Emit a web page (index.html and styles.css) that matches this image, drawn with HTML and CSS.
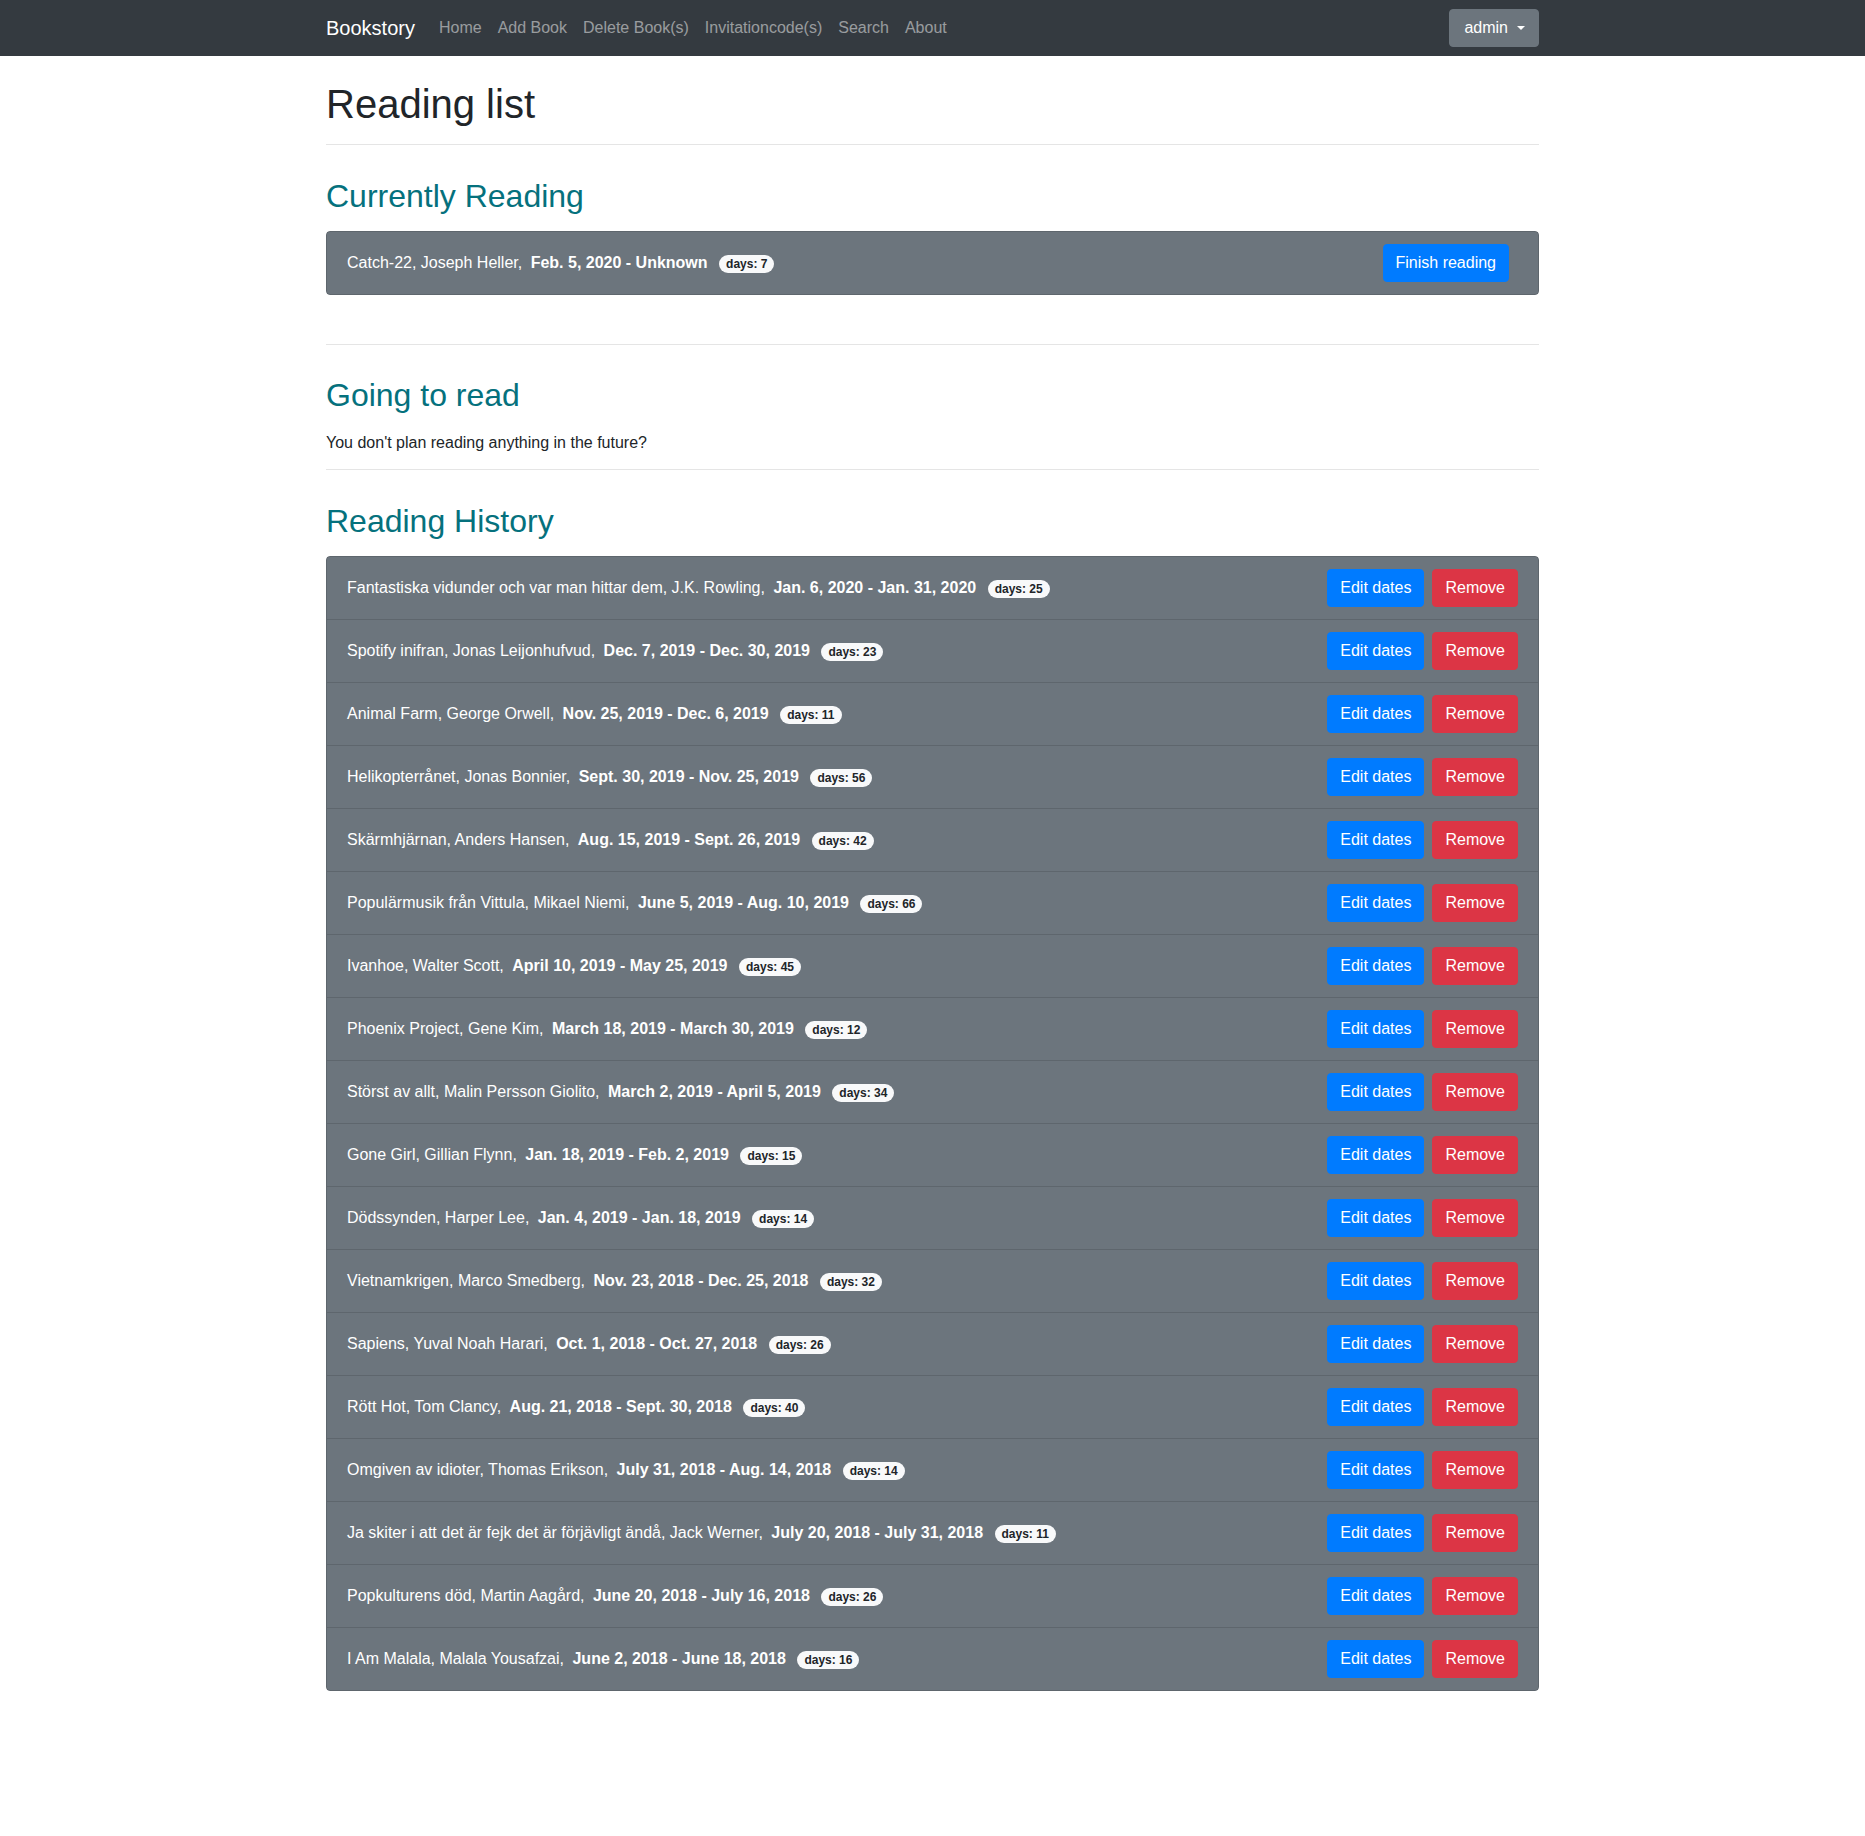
FILE: index.html
```html
<!DOCTYPE html>
<html lang="sv">
<head>
<meta charset="utf-8">
<title>Reading list</title>
<link rel="stylesheet" href="styles.css">
</head>
<body>
<nav class="navbar">
  <div class="container nav-inner">
    <div class="nav-left">
      <a class="brand" href="#">Bookstory</a>
      <a class="nav-link" href="#">Home</a>
      <a class="nav-link" href="#">Add Book</a>
      <a class="nav-link" href="#">Delete Book(s)</a>
      <a class="nav-link" href="#">Invitationcode(s)</a>
      <a class="nav-link" href="#">Search</a>
      <a class="nav-link" href="#">About</a>
    </div>
    <button class="btn btn-secondary dropdown-toggle">admin</button>
  </div>
</nav>

<main class="container">
  <h1 class="page-title">Reading list</h1>
  <hr>

  <h2 class="section-title">Currently Reading</h2>
  <ul class="list-group current">
    <li class="list-item">
      <span class="book">Catch-22, Joseph Heller, <b class="dates">Feb. 5, 2020 - Unknown</b> <span class="badge">days: 7</span></span>
      <span class="actions finish"><button class="btn btn-primary">Finish reading</button></span>
    </li>
  </ul>

  <hr>
  <h2 class="section-title going">Going to read</h2>
  <p class="empty">You don't plan reading anything in the future?</p>
  <hr class="hr-tight">

  <h2 class="section-title">Reading History</h2>
  <ul class="list-group">
    <li class="list-item"><span class="book">Fantastiska vidunder och var man hittar dem, J.K. Rowling, <b class="dates">Jan. 6, 2020 - Jan. 31, 2020</b> <span class="badge">days: 25</span></span><span class="actions"><button class="btn btn-primary">Edit dates</button><button class="btn btn-danger">Remove</button></span></li>
    <li class="list-item"><span class="book">Spotify inifran, Jonas Leijonhufvud, <b class="dates">Dec. 7, 2019 - Dec. 30, 2019</b> <span class="badge">days: 23</span></span><span class="actions"><button class="btn btn-primary">Edit dates</button><button class="btn btn-danger">Remove</button></span></li>
    <li class="list-item"><span class="book">Animal Farm, George Orwell, <b class="dates">Nov. 25, 2019 - Dec. 6, 2019</b> <span class="badge">days: 11</span></span><span class="actions"><button class="btn btn-primary">Edit dates</button><button class="btn btn-danger">Remove</button></span></li>
    <li class="list-item"><span class="book">Helikopterrånet, Jonas Bonnier, <b class="dates">Sept. 30, 2019 - Nov. 25, 2019</b> <span class="badge">days: 56</span></span><span class="actions"><button class="btn btn-primary">Edit dates</button><button class="btn btn-danger">Remove</button></span></li>
    <li class="list-item"><span class="book">Skärmhjärnan, Anders Hansen, <b class="dates">Aug. 15, 2019 - Sept. 26, 2019</b> <span class="badge">days: 42</span></span><span class="actions"><button class="btn btn-primary">Edit dates</button><button class="btn btn-danger">Remove</button></span></li>
    <li class="list-item"><span class="book">Populärmusik från Vittula, Mikael Niemi, <b class="dates">June 5, 2019 - Aug. 10, 2019</b> <span class="badge">days: 66</span></span><span class="actions"><button class="btn btn-primary">Edit dates</button><button class="btn btn-danger">Remove</button></span></li>
    <li class="list-item"><span class="book">Ivanhoe, Walter Scott, <b class="dates">April 10, 2019 - May 25, 2019</b> <span class="badge">days: 45</span></span><span class="actions"><button class="btn btn-primary">Edit dates</button><button class="btn btn-danger">Remove</button></span></li>
    <li class="list-item"><span class="book">Phoenix Project, Gene Kim, <b class="dates">March 18, 2019 - March 30, 2019</b> <span class="badge">days: 12</span></span><span class="actions"><button class="btn btn-primary">Edit dates</button><button class="btn btn-danger">Remove</button></span></li>
    <li class="list-item"><span class="book">Störst av allt, Malin Persson Giolito, <b class="dates">March 2, 2019 - April 5, 2019</b> <span class="badge">days: 34</span></span><span class="actions"><button class="btn btn-primary">Edit dates</button><button class="btn btn-danger">Remove</button></span></li>
    <li class="list-item"><span class="book">Gone Girl, Gillian Flynn, <b class="dates">Jan. 18, 2019 - Feb. 2, 2019</b> <span class="badge">days: 15</span></span><span class="actions"><button class="btn btn-primary">Edit dates</button><button class="btn btn-danger">Remove</button></span></li>
    <li class="list-item"><span class="book">Dödssynden, Harper Lee, <b class="dates">Jan. 4, 2019 - Jan. 18, 2019</b> <span class="badge">days: 14</span></span><span class="actions"><button class="btn btn-primary">Edit dates</button><button class="btn btn-danger">Remove</button></span></li>
    <li class="list-item"><span class="book">Vietnamkrigen, Marco Smedberg, <b class="dates">Nov. 23, 2018 - Dec. 25, 2018</b> <span class="badge">days: 32</span></span><span class="actions"><button class="btn btn-primary">Edit dates</button><button class="btn btn-danger">Remove</button></span></li>
    <li class="list-item"><span class="book">Sapiens, Yuval Noah Harari, <b class="dates">Oct. 1, 2018 - Oct. 27, 2018</b> <span class="badge">days: 26</span></span><span class="actions"><button class="btn btn-primary">Edit dates</button><button class="btn btn-danger">Remove</button></span></li>
    <li class="list-item"><span class="book">Rött Hot, Tom Clancy, <b class="dates">Aug. 21, 2018 - Sept. 30, 2018</b> <span class="badge">days: 40</span></span><span class="actions"><button class="btn btn-primary">Edit dates</button><button class="btn btn-danger">Remove</button></span></li>
    <li class="list-item"><span class="book">Omgiven av idioter, Thomas Erikson, <b class="dates">July 31, 2018 - Aug. 14, 2018</b> <span class="badge">days: 14</span></span><span class="actions"><button class="btn btn-primary">Edit dates</button><button class="btn btn-danger">Remove</button></span></li>
    <li class="list-item"><span class="book">Ja skiter i att det är fejk det är förjävligt ändå, Jack Werner, <b class="dates">July 20, 2018 - July 31, 2018</b> <span class="badge">days: 11</span></span><span class="actions"><button class="btn btn-primary">Edit dates</button><button class="btn btn-danger">Remove</button></span></li>
    <li class="list-item"><span class="book">Popkulturens död, Martin Aagård, <b class="dates">June 20, 2018 - July 16, 2018</b> <span class="badge">days: 26</span></span><span class="actions"><button class="btn btn-primary">Edit dates</button><button class="btn btn-danger">Remove</button></span></li>
    <li class="list-item"><span class="book">I Am Malala, Malala Yousafzai, <b class="dates">June 2, 2018 - June 18, 2018</b> <span class="badge">days: 16</span></span><span class="actions"><button class="btn btn-primary">Edit dates</button><button class="btn btn-danger">Remove</button></span></li>
  </ul>
</main>
</body>
</html>
```

FILE: styles.css
```css
* { box-sizing: border-box; }

html, body {
  margin: 0;
  padding: 0;
}

body {
  font-family: "Liberation Sans", Arial, sans-serif;
  font-size: 16px;
  line-height: 1.5;
  color: #212529;
  background: #fff;
}

.container {
  max-width: 1243px;
  margin: 0 auto;
  padding: 0 15px;
}

/* navbar */
.navbar {
  background: #343a40;
  padding: 8px 0;
}

.nav-inner {
  display: flex;
  align-items: center;
  justify-content: space-between;
  height: 40px;
}

.nav-left {
  display: flex;
  align-items: center;
}

.brand {
  color: #fff;
  font-size: 20px;
  line-height: 30px;
  padding: 5px 0;
  margin-right: 16px;
  text-decoration: none;
}

.nav-link {
  color: rgba(255, 255, 255, 0.5);
  text-decoration: none;
  padding: 8px 8px;
  line-height: 24px;
}

/* buttons */
.btn {
  font-family: inherit;
  font-size: 16px;
  line-height: 24px;
  padding: 6px 12px;
  border: 1px solid transparent;
  border-radius: 4px;
  color: #fff;
  cursor: pointer;
}

.btn-primary { background: #007bff; border-color: #007bff; }
.btn-danger { background: #dc3545; border-color: #dc3545; }
.btn-secondary { background: #6c757d; border-color: #6c757d; }

.dropdown-toggle {
  padding-left: 14px;
  padding-right: 13px;
}

.dropdown-toggle::after {
  content: "";
  display: inline-block;
  margin-left: 9px;
  vertical-align: 3px;
  border-top: 4.8px solid #fff;
  border-left: 4.8px solid transparent;
  border-right: 4.8px solid transparent;
}

/* headings */
.page-title {
  font-size: 40px;
  font-weight: 500;
  line-height: 1.2;
  margin: 24px 0 8px;
}

hr {
  border: 0;
  border-top: 1px solid rgba(0, 0, 0, 0.1);
  margin: 16px 0;
}

hr.hr-tight {
  margin-top: 14px;
}

.section-title {
  font-size: 32px;
  font-weight: 500;
  line-height: 1.2;
  color: #05717d;
  margin: 32px 0 16px;
}

.section-title.going {
  margin-top: 31px;
}

.empty {
  margin: 0;
}

/* list */
.list-group {
  list-style: none;
  margin: 0;
  padding: 0;
  border-radius: 4px;
  overflow: hidden;
}

.list-group.current {
  margin-bottom: 49px;
}

.list-item {
  display: flex;
  align-items: center;
  justify-content: space-between;
  background: #6c757d;
  color: #fff;
  padding: 12px 20px;
  border: 1px solid rgba(0, 0, 0, 0.125);
  min-height: 63px;
}

.list-item + .list-item {
  border-top: 0;
  min-height: 62px;
}

.list-group .list-item:first-child { border-radius: 4px 4px 0 0; }
.list-group .list-item:last-child { border-radius: 0 0 4px 4px; }
.list-group .list-item:only-child { border-radius: 4px; }

.dates {
  font-weight: 700;
  margin-left: 4px;
  margin-right: 4px;
}

.badge {
  display: inline-block;
  background: #f8f9fa;
  color: #212529;
  font-size: 12px;
  font-weight: 700;
  line-height: 1;
  padding: 3px 7px;
  margin-left: 3px;
  border-radius: 10px;
  vertical-align: 0;
}

.actions {
  display: flex;
  gap: 8px;
  flex-shrink: 0;
}

.actions.finish {
  margin-right: 9px;
}
```
